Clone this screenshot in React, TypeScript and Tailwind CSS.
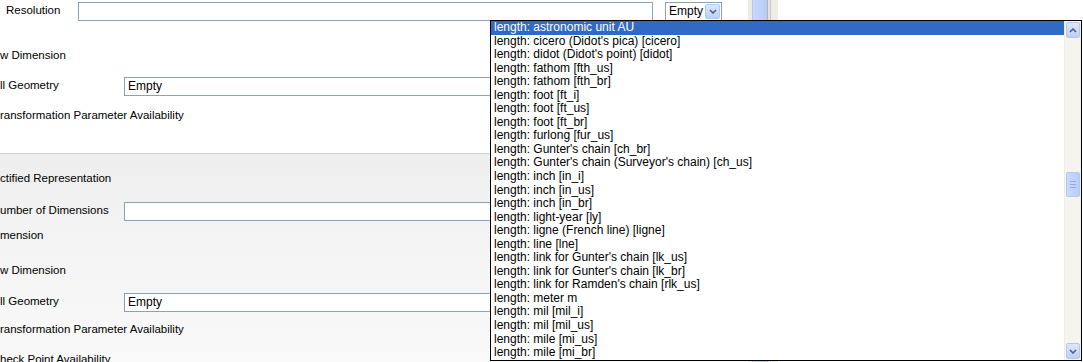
const ITEMS: string[] = [
  'length: astronomic unit AU',
  "length: cicero (Didot's pica) [cicero]",
  "length: didot (Didot's point) [didot]",
  'length: fathom [fth_us]',
  'length: fathom [fth_br]',
  'length: foot [ft_i]',
  'length: foot [ft_us]',
  'length: foot [ft_br]',
  'length: furlong [fur_us]',
  "length: Gunter's chain [ch_br]",
  "length: Gunter's chain (Surveyor's chain) [ch_us]",
  'length: inch [in_i]',
  'length: inch [in_us]',
  'length: inch [in_br]',
  'length: light-year [ly]',
  'length: ligne (French line) [ligne]',
  'length: line [lne]',
  "length: link for Gunter's chain [lk_us]",
  "length: link for Gunter's chain [lk_br]",
  "length: link for Ramden's chain [rlk_us]",
  'length: meter m',
  'length: mil [mil_i]',
  'length: mil [mil_us]',
  'length: mile [mi_us]',
  'length: mile [mi_br]',
]

function Chevron({ up = false }: { up?: boolean }) {
  return (
    <svg width="8" height="5" viewBox="0 0 8 5" className={up ? 'rotate-180' : ''}>
      <path d="M1 1 L4 4 L7 1" fill="none" stroke="#4d6185" strokeWidth="1.6" />
    </svg>
  )
}

function XpButton({ up = false, className = '' }: { up?: boolean; className?: string }) {
  return (
    <div
      className={`flex items-center justify-center rounded-[2px] border border-[#b4c8f6] bg-gradient-to-b from-[#dde7fd] to-[#bccff8] ${className}`}
    >
      <Chevron up={up} />
    </div>
  )
}

function TextBox({ value = '', className = '' }: { value?: string; className?: string }) {
  return (
    <div className={`h-[19px] border border-[#8ea0b8] bg-white pl-[3px] flex items-center text-[12px] ${className}`}>
      {value}
    </div>
  )
}

function Row({ label, mt, box }: { label: string; mt: string; box?: string }) {
  return (
    <div className={`flex items-center h-[20px] shrink-0 ${mt}`}>
      <span className="w-[124px] shrink-0 whitespace-nowrap">{label}</span>
      {box !== undefined && <TextBox value={box} className="flex-1 mr-[23px]" />}
    </div>
  )
}

export default function App() {
  return (
    <div className="relative w-[1083px] h-[362px] overflow-hidden bg-white text-[11.5px] text-black font-['Liberation_Sans',Arial,sans-serif]">
      <div className="flex h-full">
        <div className="w-[748px] flex flex-col">
          <div className="h-[153px] shrink-0 bg-white">
            <div className="flex items-center h-[20px] mt-[1px]">
              <span className="w-[78px] pl-[6px] shrink-0">Resolution</span>
              <TextBox className="w-[575px]" />
              <div className="ml-[12px] w-[57px] h-[19px] border border-[#8ea0b8] bg-white flex items-center pl-[3px] pr-[1px] text-[12px]">
                <span className="flex-1">Empty</span>
                <XpButton className="w-[15px] h-[15px]" />
              </div>
            </div>
            <Row label="w Dimension" mt="mt-[25px]" />
            <Row label="ll Geometry" mt="mt-[10px]" box="Empty" />
            <Row label="ransformation Parameter Availability" mt="mt-[10px]" />
          </div>
          <div className="flex-1 flex flex-col border-t border-[#d2d2d2] bg-gradient-to-b from-[#eeeeee] via-[#f5f5f5] to-[#f9f9f9]">
            <Row label="ctified Representation" mt="mt-[15px]" />
            <Row label="umber of Dimensions" mt="mt-[12px]" box="" />
            <Row label="mension" mt="mt-[5px]" />
            <Row label="w Dimension" mt="mt-[15px]" />
            <Row label="ll Geometry" mt="mt-[11px]" box="Empty" />
            <Row label="ransformation Parameter Availability" mt="mt-[8px]" />
            <Row label="heck Point Availability" mt="mt-[10px]" />
          </div>
        </div>
        <div className="flex w-[30px] bg-[#eeede5]">
          <div className="w-[4px]" />
          <div className="w-[15px] border-x border-[#b4c8f6] bg-gradient-to-r from-[#c9d8fb] to-[#b8cdf7]" />
          <div className="w-[1px] bg-[#b5b5b0]" />
          <div className="w-[2px] bg-[#e2e2dc]" />
          <div className="w-[1px] bg-[#c9c9c4]" />
        </div>
        <div className="flex-1 bg-white" />
      </div>

      <div className="absolute left-[490px] top-[20px] w-[592px] h-[341px] border border-black bg-white flex text-[12px]">
        <div className="flex-1 flex flex-col">
          {ITEMS.map((item, i) => (
            <div
              key={item}
              className={`h-[13.56px] leading-[13.56px] pl-[3px] whitespace-nowrap ${
                i === 0 ? 'bg-[#316ac5] text-white' : ''
              }`}
            >
              {item}
            </div>
          ))}
        </div>
        <div className="w-[17px] flex flex-col bg-[#f5f4ee] border-l border-[#eeede5]">
          <XpButton up className="h-[16px] mx-[1px] mt-[1px]" />
          <div className="h-[134px]" />
          <div className="h-[25px] mx-[1px] rounded-[2px] border border-[#b4c8f6] bg-gradient-to-r from-[#cbdafc] to-[#b9cdf8] flex flex-col items-center justify-center gap-[2px]">
            <div className="w-[6px] h-[1px] bg-[#8faaf0]" />
            <div className="w-[6px] h-[1px] bg-[#8faaf0]" />
            <div className="w-[6px] h-[1px] bg-[#8faaf0]" />
          </div>
          <div className="flex-1" />
          <XpButton className="h-[16px] mx-[1px] mb-[1px]" />
        </div>
      </div>
    </div>
  )
}
